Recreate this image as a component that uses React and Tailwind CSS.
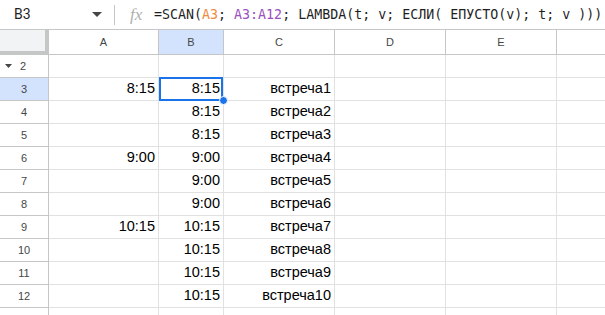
import React from 'react';

const cols = [
  { key: 'A', w: 'w-[110px]' },
  { key: 'B', w: 'w-[65px]' },
  { key: 'C', w: 'w-[111px]' },
  { key: 'D', w: 'w-[111px]' },
  { key: 'E', w: 'w-[111px]' },
  { key: 'F', w: 'w-[60px]' },
];

const rows = [
  { n: 2, a: '', b: '', c: '' },
  { n: 3, a: '8:15', b: '8:15', c: 'встреча1' },
  { n: 4, a: '', b: '8:15', c: 'встреча2' },
  { n: 5, a: '', b: '8:15', c: 'встреча3' },
  { n: 6, a: '9:00', b: '9:00', c: 'встреча4' },
  { n: 7, a: '', b: '9:00', c: 'встреча5' },
  { n: 8, a: '', b: '9:00', c: 'встреча6' },
  { n: 9, a: '10:15', b: '10:15', c: 'встреча7' },
  { n: 10, a: '', b: '10:15', c: 'встреча8' },
  { n: 11, a: '', b: '10:15', c: 'встреча9' },
  { n: 12, a: '', b: '10:15', c: 'встреча10' },
  { n: 13, a: '', b: '', c: '' },
];

function FormulaBar() {
  return (
    <div className="flex items-center h-[30px] border-b border-[#c4c7c5] bg-white shrink-0">
      <div className="w-[114px] flex items-center pl-[14px] pr-[12px] h-full">
        <span className="text-[14px] text-[#1f1f1f] flex-1" style={{ fontFamily: 'Roboto, Arial, sans-serif' }}>B3</span>
        <svg width="10" height="6" viewBox="0 0 10 6"><path d="M0 0h10L5 5z" fill="#444746" /></svg>
      </div>
      <div className="w-px h-[20px] bg-[#c4c7c5]" />
      <span className="ml-[15px] w-[24px] text-[17px] italic text-[#b0b0b0] leading-none" style={{ fontFamily: '"Liberation Serif", serif' }}>fx</span>
      <div className="text-[13.3px] text-[#1f1f1f] whitespace-nowrap" style={{ fontFamily: '"DejaVu Sans Mono", "Liberation Mono", monospace' }}>
        =SCAN(<span className="text-[#f08a3c]">A3</span>; <span className="text-[#9b4fc0]">A3:A12</span>; LAMBDA(t; v; ЕСЛИ( ЕПУСТО(v); t; v )))
      </div>
    </div>
  );
}

function HeaderRow() {
  return (
    <div className="flex h-[25px] shrink-0">
      <div className="w-[49px] shrink-0 bg-[#f1f3f4] border-r-4 border-b-4 border-[#c4c7c5]" />
      {cols.map((c) => (
        <div
          key={c.key}
          className={`${c.w} shrink-0 flex items-center justify-center border-r border-b border-[#c4c7c5] text-[11px] text-[#444746] ${c.key === 'B' ? 'bg-[#d3e3fd]' : 'bg-white'}`}
        >
          {c.key === 'F' ? '' : c.key}
        </div>
      ))}
    </div>
  );
}

function Row({ r }) {
  const sel = r.n === 3;
  return (
    <div className="flex h-[23px] shrink-0">
      <div
        className={`w-[49px] shrink-0 flex items-center border-r border-b border-[#c4c7c5] text-[11px] text-[#444746] ${sel ? 'bg-[#d3e3fd]' : 'bg-white'} ${r.n === 2 ? 'justify-start pl-[5px] gap-[8px]' : 'justify-center'}`}
      >
        {r.n === 2 && (
          <svg width="7" height="4" viewBox="0 0 7 4"><path d="M0 0h7L3.5 4z" fill="#444746" /></svg>
        )}
        {r.n}
      </div>
      {cols.map((c) => {
        const v = c.key === 'A' ? r.a : c.key === 'B' ? r.b : c.key === 'C' ? r.c : '';
        return (
          <div
            key={c.key}
            className={`${c.w} shrink-0 relative flex items-center justify-end pr-[3px] border-r border-b border-[#e1e1e1] text-[14.5px] text-black`}
          >
            {v}
            {sel && c.key === 'B' && (
              <>
                <div className="absolute left-0 top-[-1px] w-[64px] h-[24px] border-2 border-[#1a73e8]" />
                <div className="absolute left-[60px] top-[18px] w-[9px] h-[9px] rounded-full bg-[#1a73e8] border border-white z-10" />
              </>
            )}
          </div>
        );
      })}
    </div>
  );
}

export default function App() {
  return (
    <div className="w-[605px] h-[315px] overflow-hidden bg-white flex flex-col" style={{ fontFamily: '"Liberation Sans", Arial, sans-serif' }}>
      <FormulaBar />
      <HeaderRow />
      {rows.map((r) => (
        <Row key={r.n} r={r} />
      ))}
    </div>
  );
}
